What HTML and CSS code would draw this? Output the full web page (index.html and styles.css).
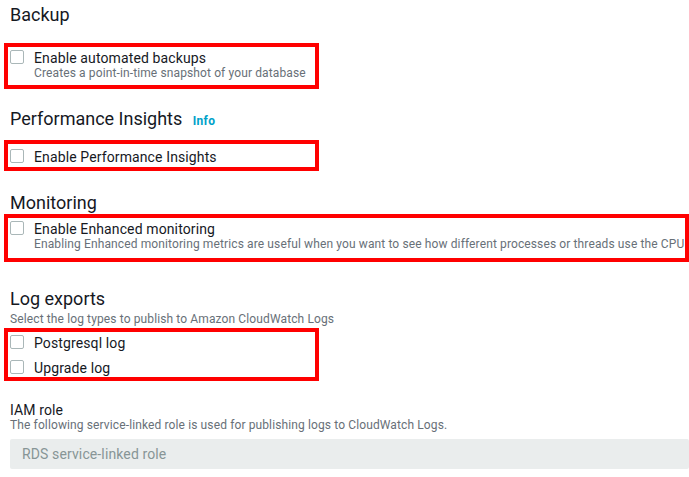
FILE: index.html
```html
<!DOCTYPE html>
<html lang="en">
<head>
<meta charset="utf-8">
<title>Additional configuration</title>
<link rel="stylesheet" href="styles.css">
</head>
<body>
<main class="page">
  <section class="sec sec-backup">
    <h2 class="heading">Backup</h2>
    <div class="hl">
      <label class="opt">
        <span class="cb"></span>
        <span class="opt-text">
          <span class="opt-label">Enable automated backups</span>
          <span class="opt-desc">Creates a point-in-time snapshot of your database</span>
        </span>
      </label>
    </div>
  </section>

  <section class="sec sec-pi">
    <h2 class="heading">Performance Insights <a class="info" href="#">Info</a></h2>
    <div class="hl hl-single">
      <label class="opt">
        <span class="cb"></span>
        <span class="opt-text"><span class="opt-label">Enable Performance Insights</span></span>
      </label>
    </div>
  </section>

  <section class="sec sec-mon">
    <h2 class="heading">Monitoring</h2>
    <div class="hl hl-wide">
      <label class="opt">
        <span class="cb"></span>
        <span class="opt-text">
          <span class="opt-label">Enable Enhanced monitoring</span>
          <span class="opt-desc">Enabling Enhanced monitoring metrics are useful when you want to see how different processes or threads use the CPU</span>
        </span>
      </label>
    </div>
  </section>

  <section class="sec sec-log">
    <h2 class="heading">Log exports</h2>
    <p class="sec-desc">Select the log types to publish to Amazon CloudWatch Logs</p>
    <div class="hl hl-list">
      <label class="opt"><span class="cb"></span><span class="opt-text"><span class="opt-label">Postgresql log</span></span></label>
      <label class="opt"><span class="cb"></span><span class="opt-text"><span class="opt-label">Upgrade log</span></span></label>
    </div>
  </section>

  <section class="sec sec-iam">
    <div class="field-label">IAM role</div>
    <p class="sec-desc">The following service-linked role is used for publishing logs to CloudWatch Logs.</p>
    <input class="field-input" type="text" disabled placeholder="RDS service-linked role">
  </section>
</main>
</body>
</html>
```

FILE: styles.css
```css
* { box-sizing: border-box; }
html, body { margin: 0; padding: 0; background: #ffffff; }
body {
  font-family: Roboto, "Noto Sans", Arial, sans-serif;
  color: #16191f;
  width: 689px;
  height: 477px;
  overflow: hidden;
}
.page { padding-left: 4px; display: flex; flex-direction: column; }
.sec { display: flex; flex-direction: column; }
.heading {
  margin: 0;
  padding-left: 6px;
  font-size: 18px;
  line-height: 22px;
  font-weight: 400;
  color: #16191f;
}
.info {
  font-size: 12px;
  font-weight: 700;
  color: #00a1c9;
  text-decoration: none;
  margin-left: 6px;
  letter-spacing: 0.3px;
}
.hl {
  border: 4px solid #ff0000;
  width: 315px;
  padding: 3px 0 5px 2px;
}
.hl-wide { width: 685px; padding-bottom: 7px; }
.hl-single { padding: 5px 0 2px 2px; }
.hl-list { padding: 3px 0 1px 2px; display: flex; flex-direction: column; gap: 9px; }
.opt { display: flex; align-items: flex-start; gap: 10px; cursor: pointer; }
.cb {
  flex: none;
  width: 14px;
  height: 14px;
  border: 1px solid #aab7b8;
  border-radius: 2px;
  background: #fff;
}
.opt-text { display: flex; flex-direction: column; }
.opt-label { font-size: 14px; line-height: 16px; color: #16191f; letter-spacing: 0.12px; }
.opt-desc { font-size: 12px; line-height: 14px; color: #687078; white-space: nowrap; letter-spacing: 0.12px; }
.sec-desc {
  margin: 0;
  padding-left: 6px;
  font-size: 12px;
  line-height: 14px;
  color: #687078;
  letter-spacing: 0.12px;
  white-space: nowrap;
}
.sec-backup { margin-top: 4px; }
.sec-backup .heading { margin-bottom: 17px; }
.sec-pi { margin-top: 19px; }
.sec-pi .heading { margin-bottom: 8px; }
.sec-mon { margin-top: 21px; }
.sec-mon .heading { margin-bottom: 0; }
.sec-log { margin-top: 26px; }
.sec-log .heading { margin-bottom: 2px; }
.sec-log .sec-desc { margin-bottom: 2px; }
.sec-iam { margin-top: 21px; padding-left: 6px; }
.sec-iam .sec-desc { padding-left: 0; margin-bottom: 7px; }
.field-label { font-size: 14px; line-height: 16px; color: #16191f; letter-spacing: 0.12px; }
.field-input {
  display: block;
  width: 679px;
  height: 30px;
  border: none;
  border-radius: 2px;
  background: #eaeded;
  padding: 0 12px;
  font-family: Roboto, "Noto Sans", Arial, sans-serif;
  font-size: 14px;
  color: #879596;
  outline: none;
  letter-spacing: 0.12px;
}
.field-input::placeholder { color: #879596; opacity: 1; }
```
